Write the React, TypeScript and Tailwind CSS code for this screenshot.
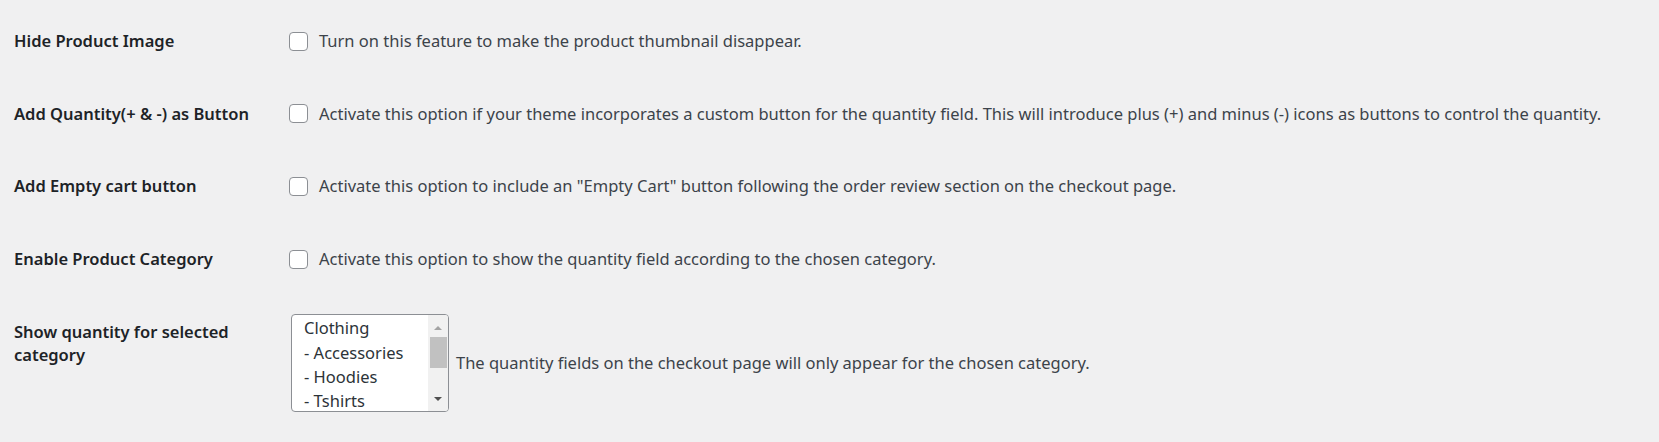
const rows = [
  {
    label: 'Hide Product Image',
    desc: 'Turn on this feature to make the product thumbnail disappear.',
  },
  {
    label: 'Add Quantity(+ & -) as Button',
    desc: 'Activate this option if your theme incorporates a custom button for the quantity field. This will introduce plus (+) and minus (-) icons as buttons to control the quantity.',
  },
  {
    label: 'Add Empty cart button',
    desc: 'Activate this option to include an "Empty Cart" button following the order review section on the checkout page.',
  },
  {
    label: 'Enable Product Category',
    desc: 'Activate this option to show the quantity field according to the chosen category.',
  },
];

const categories = ['Clothing', '- Accessories', '- Hoodies', '- Tshirts'];

function Checkbox() {
  return (
    <span className="block h-[19px] w-[19px] shrink-0 rounded-[4px] border border-[#8c8f94] bg-white" />
  );
}

function CategorySelect() {
  return (
    <div className="flex h-[98px] w-[158px] shrink-0 overflow-hidden rounded-[4px] border border-[#8c8f94] bg-white">
      <ul className="flex-1 pl-[12px] pt-[1px] text-[#2c3338]">
        {categories.map((c) => (
          <li key={c} className="leading-[24.2px] whitespace-nowrap">
            {c}
          </li>
        ))}
      </ul>
      <div className="flex w-[20px] flex-col items-center bg-[#f1f1f1]">
        <svg width="10" height="14" viewBox="0 0 10 14" className="mt-[6px]">
          <path d="M1 9 L5 5 L9 9 Z" fill="#a3a3a3" />
        </svg>
        <div className="mt-[2px] h-[31px] w-[17px] bg-[#c1c1c1]" />
        <div className="flex-1" />
        <svg width="10" height="14" viewBox="0 0 10 14" className="mb-[5px]">
          <path d="M1 5 L9 5 L5 9 Z" fill="#505050" />
        </svg>
      </div>
    </div>
  );
}

export default function App() {
  return (
    <div
      className="min-h-screen bg-[#f0f0f1] pl-[14px] pt-[5px] text-[16.5px] text-[#3c434a]"
      style={{ fontFamily: '"Noto Sans", "Open Sans", sans-serif' }}
    >
      {rows.map((r) => (
        <div key={r.label} className="flex h-[72.6px] items-center">
          <div className="w-[275px] shrink-0 font-semibold text-[#1d2327]">
            {r.label}
          </div>
          <label className="flex items-center gap-[11px]">
            <Checkbox />
            <span className="whitespace-nowrap">{r.desc}</span>
          </label>
        </div>
      ))}
      <div className="flex">
        <div className="w-[277px] shrink-0 pt-[25px] leading-[23px] font-semibold text-[#1d2327]">
          <div className="w-[225px]">Show quantity for selected category</div>
        </div>
        <div className="flex items-center gap-[7px] pt-[19px]">
          <CategorySelect />
          <span className="whitespace-nowrap">
            The quantity fields on the checkout page will only appear for the chosen category.
          </span>
        </div>
      </div>
    </div>
  );
}
